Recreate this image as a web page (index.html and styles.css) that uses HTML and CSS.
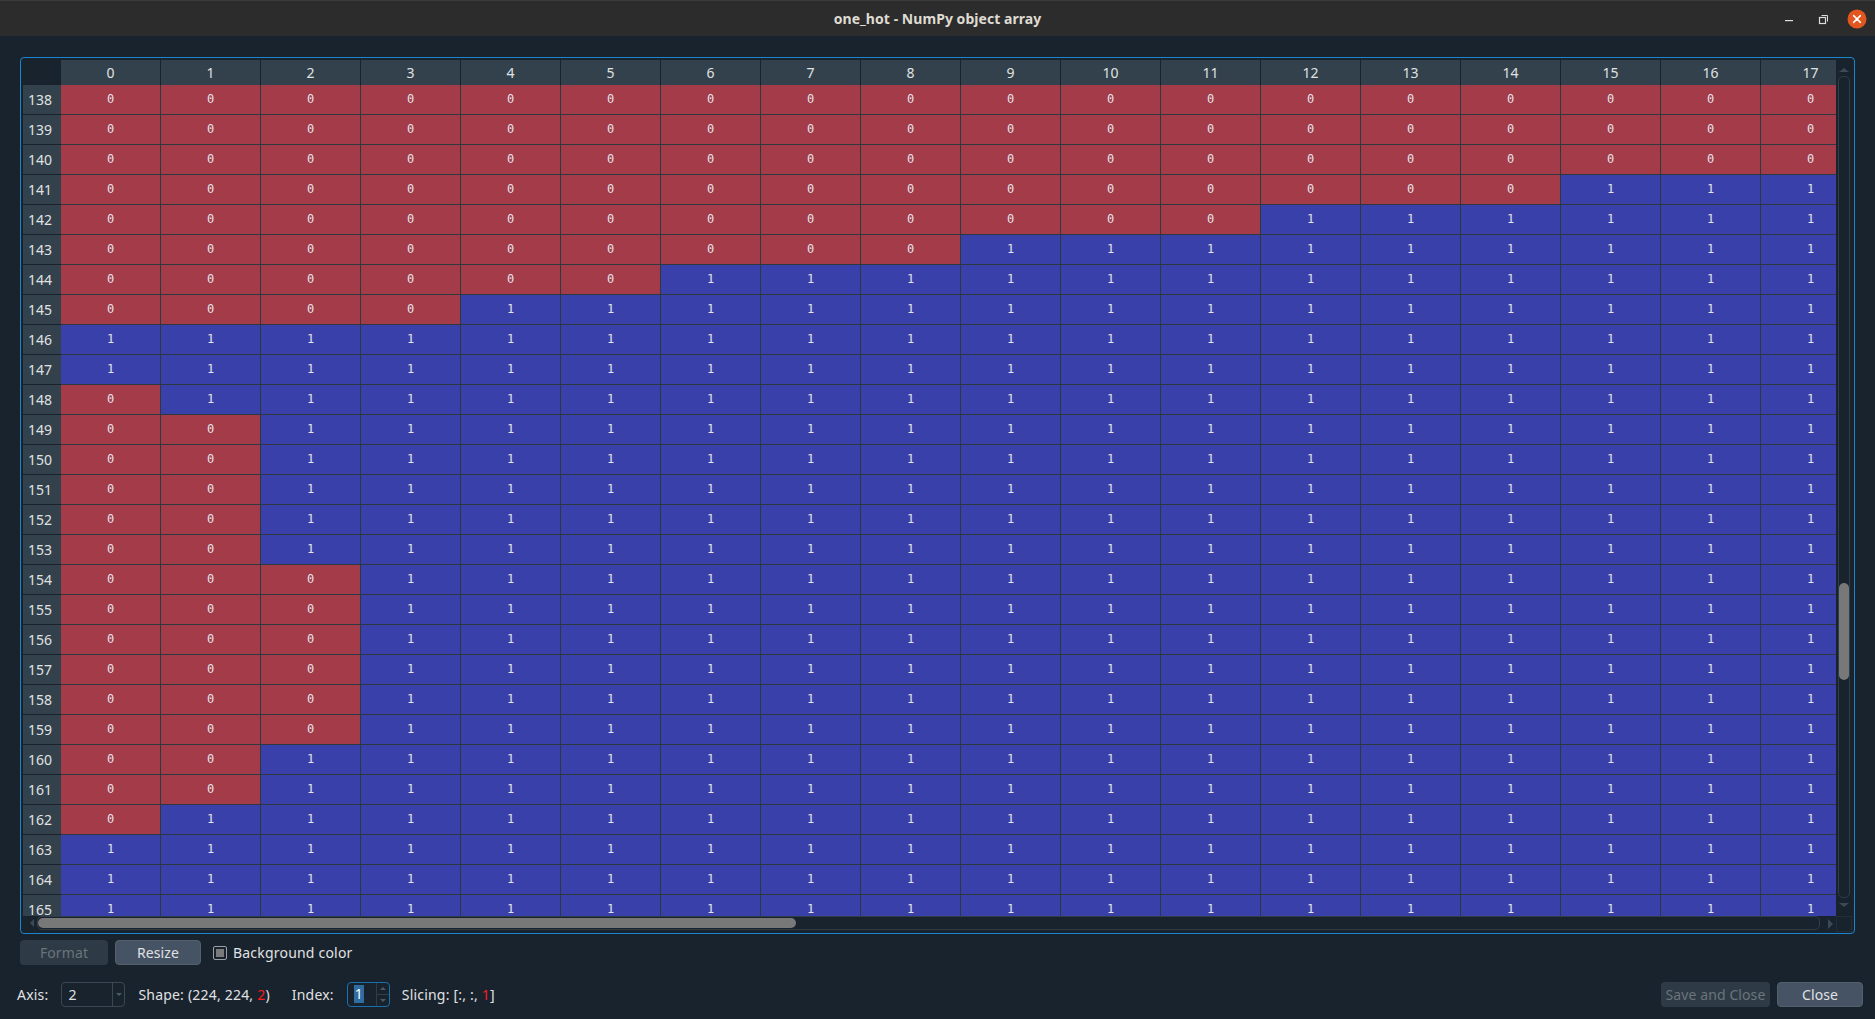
FILE: index.html
```html
<!DOCTYPE html>
<html>
<head>
<meta charset="utf-8">
<title>one_hot - NumPy object array</title>
<link rel="stylesheet" href="styles.css">
</head>
<body>
<div class="titlebar">
  <div></div>
  <div class="title">one_hot - NumPy object array</div>
  <div class="winbtns">
    <span class="wb"><svg width="12" height="12" viewBox="0 0 12 12"><rect x="2" y="7" width="8" height="1.2" fill="#dcdcdc"/></svg></span>
    <span class="wb"><svg width="12" height="12" viewBox="0 0 12 12"><rect x="2.5" y="4.5" width="6" height="6" fill="none" stroke="#dcdcdc" stroke-width="1.2"/><path d="M4.5 2.5 H10.5 V8.5" fill="none" stroke="#dcdcdc" stroke-width="1"/></svg></span>
    <span class="wb"><svg width="20" height="20" viewBox="0 0 20 20"><circle cx="10" cy="10" r="9.5" fill="#e4561f"/><path d="M6.6 6.6 L13.4 13.4 M13.4 6.6 L6.6 13.4" stroke="#ffffff" stroke-width="1.5" stroke-linecap="round"/></svg></span>
  </div>
</div>

<div class="main">
  <div class="frame">
    <div class="viewport">
      <div class="hrow">
        <span class="corner"></span>
        <span class="hc">0</span><span class="hc">1</span><span class="hc">2</span><span class="hc">3</span><span class="hc">4</span><span class="hc">5</span><span class="hc">6</span><span class="hc">7</span><span class="hc">8</span><span class="hc">9</span><span class="hc">10</span><span class="hc">11</span><span class="hc">12</span><span class="hc">13</span><span class="hc">14</span><span class="hc">15</span><span class="hc">16</span><span class="hc">17</span>
      </div>
      <div class="row z18"><span class="rh">138</span><i>0</i><i>0</i><i>0</i><i>0</i><i>0</i><i>0</i><i>0</i><i>0</i><i>0</i><i>0</i><i>0</i><i>0</i><i>0</i><i>0</i><i>0</i><i>0</i><i>0</i><i>0</i></div>
      <div class="row z18"><span class="rh">139</span><i>0</i><i>0</i><i>0</i><i>0</i><i>0</i><i>0</i><i>0</i><i>0</i><i>0</i><i>0</i><i>0</i><i>0</i><i>0</i><i>0</i><i>0</i><i>0</i><i>0</i><i>0</i></div>
      <div class="row z18"><span class="rh">140</span><i>0</i><i>0</i><i>0</i><i>0</i><i>0</i><i>0</i><i>0</i><i>0</i><i>0</i><i>0</i><i>0</i><i>0</i><i>0</i><i>0</i><i>0</i><i>0</i><i>0</i><i>0</i></div>
      <div class="row z15"><span class="rh">141</span><i>0</i><i>0</i><i>0</i><i>0</i><i>0</i><i>0</i><i>0</i><i>0</i><i>0</i><i>0</i><i>0</i><i>0</i><i>0</i><i>0</i><i>0</i><i>1</i><i>1</i><i>1</i></div>
      <div class="row z12"><span class="rh">142</span><i>0</i><i>0</i><i>0</i><i>0</i><i>0</i><i>0</i><i>0</i><i>0</i><i>0</i><i>0</i><i>0</i><i>0</i><i>1</i><i>1</i><i>1</i><i>1</i><i>1</i><i>1</i></div>
      <div class="row z9"><span class="rh">143</span><i>0</i><i>0</i><i>0</i><i>0</i><i>0</i><i>0</i><i>0</i><i>0</i><i>0</i><i>1</i><i>1</i><i>1</i><i>1</i><i>1</i><i>1</i><i>1</i><i>1</i><i>1</i></div>
      <div class="row z6"><span class="rh">144</span><i>0</i><i>0</i><i>0</i><i>0</i><i>0</i><i>0</i><i>1</i><i>1</i><i>1</i><i>1</i><i>1</i><i>1</i><i>1</i><i>1</i><i>1</i><i>1</i><i>1</i><i>1</i></div>
      <div class="row z4"><span class="rh">145</span><i>0</i><i>0</i><i>0</i><i>0</i><i>1</i><i>1</i><i>1</i><i>1</i><i>1</i><i>1</i><i>1</i><i>1</i><i>1</i><i>1</i><i>1</i><i>1</i><i>1</i><i>1</i></div>
      <div class="row"><span class="rh">146</span><i>1</i><i>1</i><i>1</i><i>1</i><i>1</i><i>1</i><i>1</i><i>1</i><i>1</i><i>1</i><i>1</i><i>1</i><i>1</i><i>1</i><i>1</i><i>1</i><i>1</i><i>1</i></div>
      <div class="row"><span class="rh">147</span><i>1</i><i>1</i><i>1</i><i>1</i><i>1</i><i>1</i><i>1</i><i>1</i><i>1</i><i>1</i><i>1</i><i>1</i><i>1</i><i>1</i><i>1</i><i>1</i><i>1</i><i>1</i></div>
      <div class="row z1"><span class="rh">148</span><i>0</i><i>1</i><i>1</i><i>1</i><i>1</i><i>1</i><i>1</i><i>1</i><i>1</i><i>1</i><i>1</i><i>1</i><i>1</i><i>1</i><i>1</i><i>1</i><i>1</i><i>1</i></div>
      <div class="row z2"><span class="rh">149</span><i>0</i><i>0</i><i>1</i><i>1</i><i>1</i><i>1</i><i>1</i><i>1</i><i>1</i><i>1</i><i>1</i><i>1</i><i>1</i><i>1</i><i>1</i><i>1</i><i>1</i><i>1</i></div>
      <div class="row z2"><span class="rh">150</span><i>0</i><i>0</i><i>1</i><i>1</i><i>1</i><i>1</i><i>1</i><i>1</i><i>1</i><i>1</i><i>1</i><i>1</i><i>1</i><i>1</i><i>1</i><i>1</i><i>1</i><i>1</i></div>
      <div class="row z2"><span class="rh">151</span><i>0</i><i>0</i><i>1</i><i>1</i><i>1</i><i>1</i><i>1</i><i>1</i><i>1</i><i>1</i><i>1</i><i>1</i><i>1</i><i>1</i><i>1</i><i>1</i><i>1</i><i>1</i></div>
      <div class="row z2"><span class="rh">152</span><i>0</i><i>0</i><i>1</i><i>1</i><i>1</i><i>1</i><i>1</i><i>1</i><i>1</i><i>1</i><i>1</i><i>1</i><i>1</i><i>1</i><i>1</i><i>1</i><i>1</i><i>1</i></div>
      <div class="row z2"><span class="rh">153</span><i>0</i><i>0</i><i>1</i><i>1</i><i>1</i><i>1</i><i>1</i><i>1</i><i>1</i><i>1</i><i>1</i><i>1</i><i>1</i><i>1</i><i>1</i><i>1</i><i>1</i><i>1</i></div>
      <div class="row z3"><span class="rh">154</span><i>0</i><i>0</i><i>0</i><i>1</i><i>1</i><i>1</i><i>1</i><i>1</i><i>1</i><i>1</i><i>1</i><i>1</i><i>1</i><i>1</i><i>1</i><i>1</i><i>1</i><i>1</i></div>
      <div class="row z3"><span class="rh">155</span><i>0</i><i>0</i><i>0</i><i>1</i><i>1</i><i>1</i><i>1</i><i>1</i><i>1</i><i>1</i><i>1</i><i>1</i><i>1</i><i>1</i><i>1</i><i>1</i><i>1</i><i>1</i></div>
      <div class="row z3"><span class="rh">156</span><i>0</i><i>0</i><i>0</i><i>1</i><i>1</i><i>1</i><i>1</i><i>1</i><i>1</i><i>1</i><i>1</i><i>1</i><i>1</i><i>1</i><i>1</i><i>1</i><i>1</i><i>1</i></div>
      <div class="row z3"><span class="rh">157</span><i>0</i><i>0</i><i>0</i><i>1</i><i>1</i><i>1</i><i>1</i><i>1</i><i>1</i><i>1</i><i>1</i><i>1</i><i>1</i><i>1</i><i>1</i><i>1</i><i>1</i><i>1</i></div>
      <div class="row z3"><span class="rh">158</span><i>0</i><i>0</i><i>0</i><i>1</i><i>1</i><i>1</i><i>1</i><i>1</i><i>1</i><i>1</i><i>1</i><i>1</i><i>1</i><i>1</i><i>1</i><i>1</i><i>1</i><i>1</i></div>
      <div class="row z3"><span class="rh">159</span><i>0</i><i>0</i><i>0</i><i>1</i><i>1</i><i>1</i><i>1</i><i>1</i><i>1</i><i>1</i><i>1</i><i>1</i><i>1</i><i>1</i><i>1</i><i>1</i><i>1</i><i>1</i></div>
      <div class="row z2"><span class="rh">160</span><i>0</i><i>0</i><i>1</i><i>1</i><i>1</i><i>1</i><i>1</i><i>1</i><i>1</i><i>1</i><i>1</i><i>1</i><i>1</i><i>1</i><i>1</i><i>1</i><i>1</i><i>1</i></div>
      <div class="row z2"><span class="rh">161</span><i>0</i><i>0</i><i>1</i><i>1</i><i>1</i><i>1</i><i>1</i><i>1</i><i>1</i><i>1</i><i>1</i><i>1</i><i>1</i><i>1</i><i>1</i><i>1</i><i>1</i><i>1</i></div>
      <div class="row z1"><span class="rh">162</span><i>0</i><i>1</i><i>1</i><i>1</i><i>1</i><i>1</i><i>1</i><i>1</i><i>1</i><i>1</i><i>1</i><i>1</i><i>1</i><i>1</i><i>1</i><i>1</i><i>1</i><i>1</i></div>
      <div class="row"><span class="rh">163</span><i>1</i><i>1</i><i>1</i><i>1</i><i>1</i><i>1</i><i>1</i><i>1</i><i>1</i><i>1</i><i>1</i><i>1</i><i>1</i><i>1</i><i>1</i><i>1</i><i>1</i><i>1</i></div>
      <div class="row"><span class="rh">164</span><i>1</i><i>1</i><i>1</i><i>1</i><i>1</i><i>1</i><i>1</i><i>1</i><i>1</i><i>1</i><i>1</i><i>1</i><i>1</i><i>1</i><i>1</i><i>1</i><i>1</i><i>1</i></div>
      <div class="row"><span class="rh">165</span><i>1</i><i>1</i><i>1</i><i>1</i><i>1</i><i>1</i><i>1</i><i>1</i><i>1</i><i>1</i><i>1</i><i>1</i><i>1</i><i>1</i><i>1</i><i>1</i><i>1</i><i>1</i></div>
    </div>
    <div class="vscroll">
      <div class="arr-area up"><span class="tri-up"></span></div>
      <div class="vgroove"><div class="vhandle"></div></div>
      <div class="arr-area down"><span class="tri-down"></span></div>
    </div>
    <div class="hscroll">
      <div class="harr left"><span class="tri-left"></span></div>
      <div class="hgroove"><div class="hhandle"></div></div>
      <div class="harr right"><span class="tri-right"></span></div>
    </div>
    <div class="scorner"></div>
  </div>

  <div class="tools">
    <div class="btn dis fmt">Format</div>
    <div class="btn en rsz">Resize</div>
    <div class="check"><span class="box"><span class="fill"></span></span><span class="lbl">Background color</span></div>
  </div>

  <div class="bottom">
    <span class="lab axis">Axis:</span>
    <div class="combo"><span class="cval">2</span><span class="cdrop"><span class="tri-small"></span></span></div>
    <span class="lab shape">Shape: (224, 224, <span class="red">2</span>)</span>
    <span class="lab index">Index:</span>
    <div class="spin"><span class="sval"><span class="sel">1</span></span><span class="sbtns"><span class="sup"><span class="tri-su"></span></span><span class="sdn"><span class="tri-sd"></span></span></span></div>
    <span class="lab slicing">Slicing: [:, :, <span class="red">1</span>]</span>
    <span class="spacer"></span>
    <div class="btn dis save">Save and Close</div>
    <div class="btn en close">Close</div>
  </div>
</div>
</body>
</html>
```

FILE: styles.css
```css
* { box-sizing: border-box; }
html, body { margin: 0; padding: 0; }
body {
  width: 1875px;
  height: 1019px;
  overflow: hidden;
  background: #19232d;
  color: #e0e1e3;
  font-family: "Noto Sans", "DejaVu Sans", sans-serif;
}

/* title bar */
.titlebar {
  height: 36px;
  background: #2c2c2c;
  border-top: 1px solid #3b3b3b;
  display: grid;
  grid-template-columns: 1fr auto 1fr;
  align-items: center;
}
.title {
  font-weight: bold;
  font-size: 14px;
  color: #dfdbd2;
  letter-spacing: 0.05px;
}
.winbtns {
  display: flex;
  justify-content: flex-end;
  padding-right: 1px;
}
.wb {
  width: 34px;
  height: 35px;
  display: flex;
  align-items: center;
  justify-content: center;
}

/* main */
.main {
  padding: 21px 12px 0 20px;
  display: flex;
  flex-direction: column;
}
.frame {
  margin: 0 8px 0 0;
  height: 877px;
  border: 1px solid #1a86cc;
  border-radius: 4px;
  padding: 2px 2px 1px 2px;
  display: grid;
  grid-template-columns: 1813px 16px;
  grid-template-rows: 856px 16px;
}
.viewport {
  overflow: hidden;
  display: flex;
  flex-direction: column;
}
.hrow {
  display: flex;
  height: 25px;
  flex: 0 0 25px;
}
.corner {
  flex: 0 0 38px;
  background: #19232d;
}
.hc {
  flex: 0 0 100px;
  background: #32414b;
  border-right: 1px solid #19232d;
  text-align: center;
  line-height: 25px;
  font-size: 14px;
  color: #e0e1e3;
}
.row {
  display: flex;
  height: 30px;
  flex: 0 0 30px;
}
.rh {
  flex: 0 0 38px;
  background: #32414b;
  border-bottom: 1px solid #19232d;
  padding-left: 5px;
  line-height: 29px;
  font-size: 14px;
  color: #e0e1e3;
}
.row i {
  flex: 0 0 100px;
  font-style: normal;
  background: #3a40aa;
  border-right: 1px solid #2e3841;
  border-bottom: 1px solid #2e3841;
  text-align: center;
  line-height: 29px;
  font-family: "DejaVu Sans Mono", monospace;
  font-size: 12px;
  color: #e4e2ea;
}
.z1 i:nth-of-type(-n+1),
.z2 i:nth-of-type(-n+2),
.z3 i:nth-of-type(-n+3),
.z4 i:nth-of-type(-n+4),
.z6 i:nth-of-type(-n+6),
.z9 i:nth-of-type(-n+9),
.z12 i:nth-of-type(-n+12),
.z15 i:nth-of-type(-n+15),
.z18 i:nth-of-type(-n+18) {
  background: #a33b48;
}

/* vertical scrollbar */
.vscroll {
  display: flex;
  flex-direction: column;
}
.arr-area {
  display: flex;
  justify-content: center;
}
.arr-area.up { height: 16px; flex: 0 0 16px; padding-top: 8px; }
.arr-area.down { height: 18px; flex: 0 0 18px; padding-top: 5px; }
.tri-up {
  width: 0; height: 0;
  border-left: 5px solid transparent;
  border-right: 5px solid transparent;
  border-bottom: 4px solid #3c4a55;
}
.tri-down {
  width: 0; height: 0;
  border-left: 5px solid transparent;
  border-right: 5px solid transparent;
  border-top: 4px solid #3c4a55;
}
.vgroove {
  flex: 1;
  margin: 0 2px;
  border: 1px solid #2f3d48;
  border-radius: 5px;
}
.vhandle {
  margin-top: 506px;
  height: 97px;
  background: #787878;
  border-radius: 5px;
}

/* horizontal scrollbar */
.hscroll {
  display: flex;
  align-items: flex-start;
}
.harr {
  height: 16px;
  display: flex;
  align-items: center;
}
.harr.left { flex: 0 0 14px; padding-left: 7px; padding-bottom: 2px; }
.harr.right { flex: 0 0 16px; padding-left: 8px; padding-bottom: 1px; }
.tri-left {
  width: 0; height: 0;
  border-top: 4px solid transparent;
  border-bottom: 4px solid transparent;
  border-right: 4px solid #3c4a55;
}
.tri-right {
  width: 0; height: 0;
  border-top: 5px solid transparent;
  border-bottom: 5px solid transparent;
  border-left: 5px solid #3c4a55;
}
.hgroove {
  flex: 1;
  height: 14px;
  border: 1px solid #2f3d48;
  border-radius: 5px;
  padding-top: 1px;
}
.hhandle {
  width: 758px;
  height: 10px;
  background: #787878;
  border-radius: 5px;
}
.scorner {
  border: 1px solid #212d37;
  background: #19232d;
}

/* tool row */
.tools {
  display: flex;
  align-items: center;
  height: 25px;
  margin-top: 6px;
}
.btn {
  height: 25px;
  border-radius: 4px;
  font-size: 14px;
  letter-spacing: 0.1px;
  display: flex;
  align-items: center;
  justify-content: center;
}
.btn.dis {
  background: #2e3b46;
  color: #6b747b;
}
.btn.en {
  background: #455364;
  border: 1px solid #52606c;
  color: #e0e1e3;
}
.fmt { width: 88px; }
.rsz { width: 86px; margin-left: 7px; }
.check {
  display: flex;
  align-items: center;
  margin-left: 12px;
}
.box {
  width: 14px;
  height: 14px;
  border: 1px solid #9aa0a5;
  border-radius: 2px;
  padding: 2px;
  display: flex;
}
.fill {
  flex: 1;
  background: #7a7a7a;
}
.lbl {
  margin-left: 6px;
  font-size: 14px;
  letter-spacing: 0.2px;
  color: #e0e1e3;
}

/* bottom row */
.bottom {
  display: flex;
  align-items: center;
  height: 26px;
  margin-top: 16px;
  margin-left: -3px;
}
.lab {
  font-size: 14px;
  letter-spacing: 0.2px;
  color: #e0e1e3;
  white-space: nowrap;
}
.red { color: #ff1a1a; }
.combo {
  margin-left: 13px;
  width: 64px;
  height: 25px;
  border: 1px solid #3a4853;
  border-radius: 4px;
  display: flex;
}
.cval {
  flex: 1;
  padding-left: 6px;
  font-size: 14px;
  line-height: 23px;
}
.cdrop {
  width: 12px;
  border-left: 1px solid #3a4853;
  display: flex;
  align-items: center;
  justify-content: center;
}
.tri-small {
  width: 0; height: 0;
  border-left: 3px solid transparent;
  border-right: 3px solid transparent;
  border-top: 3px solid #4c5a66;
}
.shape { margin-left: 13px; }
.index { margin-left: 22px; }
.spin {
  margin-left: 13px;
  width: 43px;
  height: 25px;
  border: 1px solid #1a6fae;
  border-radius: 4px;
  display: flex;
}
.sval {
  flex: 1;
  padding-left: 6px;
  display: flex;
  align-items: center;
}
.sel {
  background: #2f6da3;
  color: #ffffff;
  font-size: 14px;
  line-height: 18px;
  padding: 0 1px;
}
.sbtns {
  width: 13px;
  border-left: 1px solid #2f3d48;
  display: flex;
  flex-direction: column;
}
.sup, .sdn {
  flex: 1;
  display: flex;
  align-items: center;
  justify-content: center;
}
.sup { border-bottom: 1px solid #2f3d48; }
.tri-su {
  width: 0; height: 0;
  border-left: 3px solid transparent;
  border-right: 3px solid transparent;
  border-bottom: 3px solid #4c5a66;
}
.tri-sd {
  width: 0; height: 0;
  border-left: 3px solid transparent;
  border-right: 3px solid transparent;
  border-top: 3px solid #4c5a66;
}
.slicing { margin-left: 12px; }
.spacer { flex: 1; }
.save { width: 109px; }
.close { width: 86px; margin-left: 7px; }
```
